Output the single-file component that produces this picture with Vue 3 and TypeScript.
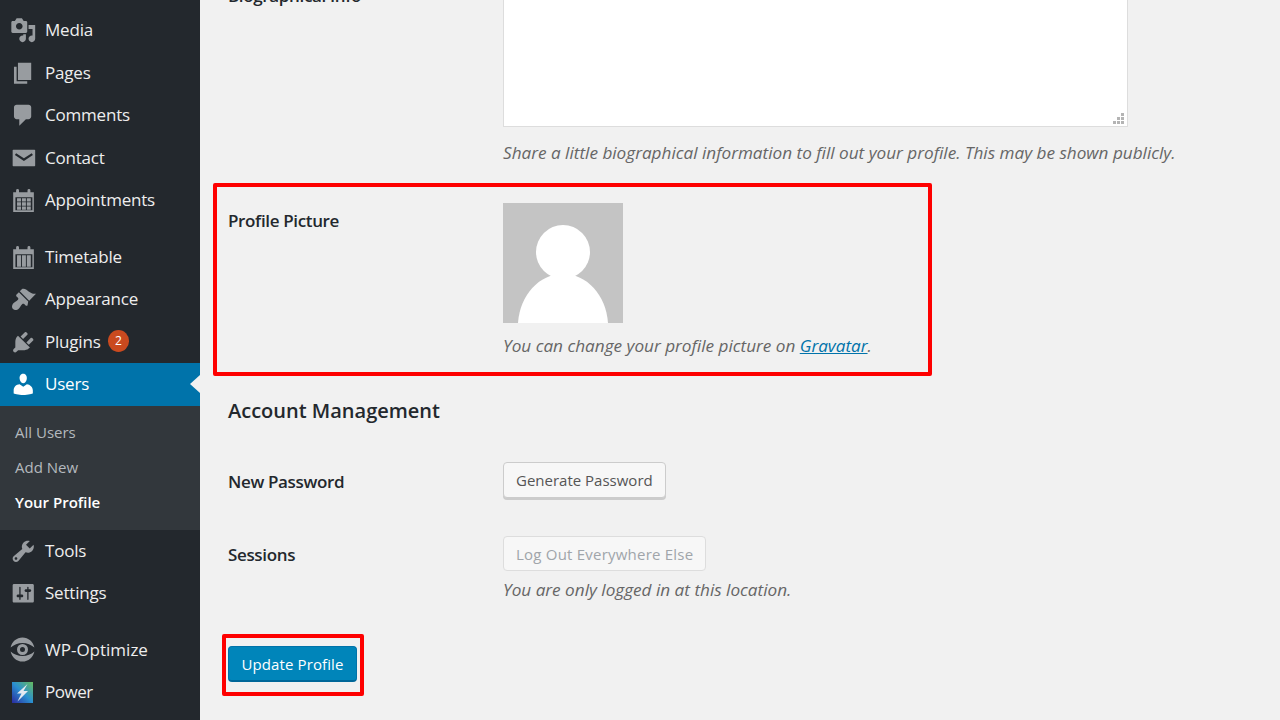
<script setup lang="ts">
interface MenuItem {
  label: string
  d: string
}

const cells = [5.3, 9, 12.7]
  .flatMap((x) => [8.5, 11.6, 14.7].map((y) => `M${x} ${y}h3v2.5h-3z`))
  .join('')
const calendarFrame = 'M2.4 4h2.200V2.600a1.100 1.100 0 0 1 2.200 0V4h6.400V2.600a1.100 1.100 0 0 1 2.200 0V4h2.600v14.900H2.400zM4.100 7.700v9.800h12.800V7.700z'

const groupA: MenuItem[] = [
  { label: 'Media', d: 'M13 11V4c0-.55-.45-1-1-1h-1.67L9 1H5L3.67 3H2c-.55 0-1 .45-1 1v7c0 .55.45 1 1 1h10c.55 0 1-.45 1-1zM7 4.5c1.38 0 2.5 1.12 2.5 2.5S8.38 9.5 7 9.5 4.5 8.38 4.5 7 5.62 4.5 7 4.5zM14 6h5v10.5c0 1.38-1.12 2.5-2.5 2.5S14 17.88 14 16.5s1.12-2.5 2.5-2.5c.17 0 .34.02.5.05V9h-3V6zm-4 8.05V13h2v3.5c0 1.38-1.12 2.5-2.5 2.5S7 17.88 7 16.5 8.12 14 9.5 14c.17 0 .34.02.5.05z' },
  { label: 'Pages', d: 'M6 15V2h10v13H6zm-1 1h8v2H3V5h2v11z' },
  { label: 'Comments', d: 'M5 2h9c1.1 0 2 .9 2 2v7c0 1.1-.9 2-2 2h-2l-5 5v-5H5c-1.1 0-2-.9-2-2V4c0-1.1.9-2 2-2z' },
  { label: 'Contact', d: 'M2.5 3.500h16a.5.5 0 0 1 .5.5v11.500a.5.5 0 0 1-.5.5h-16a.5.5 0 0 1-.5-.5V4a.5.5 0 0 1 .5-.5zM4.600 6.200l-.9 1.300 6.800 4.600 6.800-4.600-.9-1.300-5.900 3.800z' },
  { label: 'Appointments', d: calendarFrame + cells }
]

const groupB: MenuItem[] = [
  { label: 'Timetable', d: calendarFrame + 'M5.300 8.500h3v8.700h-3zM9 8.500h3v8.700H9zM12.700 8.500h3v8.700h-3z' },
  { label: 'Appearance', d: 'M14.48 11.06L7.41 3.99l1.5-1.5c.5-.56 2.3-.47 3.51.32 1.21.8 1.43 1.28 2.91 2.1 1.18.64 2.45 1.26 4.45.85zM13.77 11.77L6.7 4.7 4.93 6.47c-.39.39-.39 1.02 0 1.41l1.06 1.06c.39.39.39 1.03 0 1.42-.6.6-1.43 1.11-2.21 1.69-.35.26-.7.53-1.01.84-1.34 1.34-1.75 3.3-.5 4.5s3.1.9 4.5-.5c.3-.3.6-.7.85-1.05.58-.78 1.09-1.6 1.69-2.2.39-.39 1.03-.39 1.42 0l1.06 1.06c.39.39 1.02.39 1.41 0z' },
  { label: 'Plugins', d: 'M13.11 4.36L9.87 7.6 8 5.73l3.24-3.24c.35-.34 1.05-.2 1.56.32.52.51.66 1.21.31 1.55zm-8 1.77l.91-1.12 9.01 9.01-1.19.84c-.71.71-2.63 1.16-3.82 1.16H6.14L4.9 17.26c-.59.59-1.54.59-2.12 0-.59-.58-.59-1.53 0-2.12l1.24-1.24v-3.88c0-1.13.4-3.19 1.09-3.89zm7.26 3.97l3.24-3.24c.34-.35 1.04-.21 1.55.31.52.51.66 1.21.31 1.55l-3.24 3.25z' }
]

const usersIcon = 'M10 9.25c-2.27 0-2.73-3.44-2.73-3.44C7 4.02 7.82 2 9.97 2c2.16 0 2.98 2.02 2.71 3.81 0 0-.41 3.44-2.68 3.44zm0 2.57L12.72 10c2.39 0 4.52 2.33 4.52 4.53v2.49s-3.65 1.13-7.24 1.13c-3.65 0-7.24-1.13-7.24-1.13v-2.49c0-2.25 1.94-4.48 4.47-4.48z'

const groupC: MenuItem[] = [
  { label: 'Tools', d: 'M16.68 9.77c-1.34 1.34-3.3 1.67-4.95.99l-5.41 6.52c-.99.99-2.59.99-3.58 0s-.99-2.59 0-3.57l6.52-5.42c-.68-1.65-.35-3.61.99-4.95 1.28-1.28 3.12-1.62 4.72-1.06l-2.89 2.89 2.82 2.82 2.86-2.87c.53 1.58.18 3.39-1.08 4.65zM3.81 16.21c.4.39 1.04.39 1.43 0 .4-.4.4-1.04 0-1.43-.39-.4-1.03-.4-1.43 0-.39.39-.39 1.03 0 1.43z' },
  { label: 'Settings', d: 'M18 16V4c0-.55-.45-1-1-1H3c-.55 0-1 .45-1 1v12c0 .55.45 1 1 1h14c.55 0 1-.45 1-1zM8 11h1c.55 0 1 .45 1 1s-.45 1-1 1H8v1.5c0 .28-.22.5-.5.5s-.5-.22-.5-.5V13H6c-.55 0-1-.45-1-1s.45-1 1-1h1V5.5c0-.28.22-.5.5-.5s.5.22.5.5V11zm5-2h-1c-.55 0-1-.45-1-1s.45-1 1-1h1V5.5c0-.28.22-.5.5-.5s.5.22.5.5V7h1c.55 0 1 .45 1 1s-.45 1-1 1h-1v5.5c0 .28-.22.5-.5.5s-.5-.22-.5-.5V9z' }
]

const subItems: string[] = ['All Users', 'Add New', 'Your Profile']
</script>

<template>
  <div class="page">
    <aside class="sidebar">
      <div class="group">
        <div v-for="item in groupA" :key="item.label" class="item">
          <svg class="icon" viewBox="0 0 20 20"><path :d="item.d" fill-rule="evenodd" /></svg>
          <span>{{ item.label }}</span>
        </div>
      </div>
      <div class="group">
        <div v-for="item in groupB" :key="item.label" class="item">
          <svg class="icon" viewBox="0 0 20 20"><path :d="item.d" fill-rule="evenodd" /></svg>
          <span>{{ item.label }}</span>
          <span v-if="item.label === 'Plugins'" class="badge">2</span>
        </div>
        <div class="item current">
          <svg class="icon" viewBox="0 0 20 20"><path :d="usersIcon" /></svg>
          <span>Users</span>
          <i class="arrow"></i>
        </div>
        <div class="submenu">
          <div v-for="(s, i) in subItems" :key="s" class="sub" :class="{ active: i === 2 }">{{ s }}</div>
        </div>
        <div v-for="item in groupC" :key="item.label" class="item">
          <svg class="icon" viewBox="0 0 20 20"><path :d="item.d" fill-rule="evenodd" /></svg>
          <span>{{ item.label }}</span>
        </div>
      </div>
      <div class="group">
        <div class="item wp-optimize">
          <svg class="icon wide" viewBox="0 0 25 25">
            <path d="M.6 10.600C1.800 4.800 6.700.5 12.500.5s10.700 4.300 11.900 10.100C21.200 7.800 17 6 12.500 6S3.800 7.800.6 10.600z" />
            <path d="M.6 14.400C1.800 20.200 6.700 24.500 12.500 24.500s10.700-4.300 11.900-10.100C21.200 17.200 17 19 12.500 19S3.800 17.200.6 14.400z" />
            <path fill-rule="evenodd" d="M12.500 7a5.500 5.500 0 1 1 0 11 5.500 5.500 0 0 1 0-11zM12.500 10a2.500 2.500 0 1 0 0 5 2.500 2.500 0 0 0 0-5z" />
          </svg>
          <span>WP-Optimize</span>
        </div>
        <div class="item power-item">
          <svg class="power" viewBox="0 0 21 21">
            <defs>
              <linearGradient id="pw" x1="0" y1="1" x2="1" y2="0">
                <stop offset="0" stop-color="#2b2a9e" />
                <stop offset="0.5" stop-color="#2a8fd0" />
                <stop offset="1" stop-color="#66bb5e" />
              </linearGradient>
            </defs>
            <rect width="21" height="21" fill="url(#pw)" />
            <path d="M15.500 2L5 11.500H9.500L5.500 19.500 16 9h-4.500z" fill="#e4e9f1" />
          </svg>
          <span>Power</span>
        </div>
      </div>
    </aside>

    <main class="main">
      <section class="row bio-row">
        <div class="label">Biographical Info</div>
        <div class="field">
          <div class="textarea">
            <svg class="grip" viewBox="0 0 11 11">
              <path d="M8 0h3v3H8zM4 4h3v3H4zM8 4h3v3H8zM0 8h3v3H0zM4 8h3v3H4zM8 8h3v3H8z" />
            </svg>
          </div>
          <p class="desc bio-desc">Share a little biographical information to fill out your profile. This may be shown publicly.</p>
        </div>
      </section>

      <section class="row picture-row">
        <div class="label">Profile Picture</div>
        <div class="field">
          <svg class="avatar" viewBox="0 0 120 120">
            <rect width="120" height="120" fill="#c4c4c4" />
            <ellipse cx="60" cy="49" rx="27" ry="27" fill="#fff" />
            <path d="M15 120C17 92 36 71 60 71s43 21 45 49z" fill="#fff" />
          </svg>
          <p class="desc picture-desc">You can change your profile picture on <a class="link">Gravatar</a>.</p>
        </div>
      </section>

      <h2 class="heading">Account Management</h2>

      <section class="row password-row">
        <div class="label">New Password</div>
        <div class="field"><button class="btn" type="button">Generate Password</button></div>
      </section>

      <section class="row sessions-row">
        <div class="label">Sessions</div>
        <div class="field">
          <button class="btn disabled" type="button">Log Out Everywhere Else</button>
          <p class="desc sessions-desc">You are only logged in at this location.</p>
        </div>
      </section>

      <button class="primary" type="button">Update Profile</button>
    </main>

    <div class="mark mark-picture"></div>
    <div class="mark mark-update"></div>
  </div>
</template>

<style>
html, body { margin: 0; background: #f1f1f1; overflow: hidden; }
</style>

<style scoped>
.page {
  position: relative;
  display: flex;
  width: 1280px;
  height: 720px;
  overflow: hidden;
  background: #f1f1f1;
  font-family: "Open Sans", "Liberation Sans", sans-serif;
  color: #23282d;
}
.sidebar {
  flex: 0 0 200px;
  height: 720px;
  padding-top: 9px;
  box-sizing: border-box;
  background: #23282d;
  display: flex;
  flex-direction: column;
  gap: 14px;
}
.item {
  position: relative;
  display: flex;
  align-items: center;
  height: 42.5px;
  padding-left: 45px;
  padding-bottom: 1px;
  box-sizing: border-box;
  font-size: 17px;
  letter-spacing: -0.2px;
  color: #eee;
}
.wp-optimize { letter-spacing: 0; }
.power-item { letter-spacing: -0.5px; }
.icon {
  position: absolute;
  left: 9.5px;
  top: 8px;
  width: 26.5px;
  height: 26.5px;
  fill: #989ca0;
}
.icon.wide {
  left: 10px;
  top: 8.5px;
  width: 25px;
  height: 25px;
}
.power {
  position: absolute;
  left: 12px;
  top: 10.5px;
  width: 21px;
  height: 21px;
}
.badge {
  width: 21.5px;
  height: 22px;
  margin-left: 7px;
  border-radius: 50%;
  background: #ca4a1f;
  color: #fff;
  font-size: 12px;
  line-height: 22px;
  letter-spacing: 0;
  text-align: center;
}
.current {
  background: #0073aa;
  color: #fff;
}
.current .icon { fill: #fff; }
.arrow {
  position: absolute;
  right: 0;
  top: 12px;
  width: 0;
  height: 0;
  border-style: solid;
  border-width: 9.5px 10px 9.5px 0;
  border-color: transparent #f1f1f1 transparent transparent;
}
.submenu {
  height: 124px;
  padding: 9px 0 11px;
  box-sizing: border-box;
  background: #32373c;
}
.sub {
  height: 35px;
  line-height: 35px;
  padding-left: 15px;
  font-size: 15px;
  color: #b4b9be;
}
.sub.active {
  color: #fff;
  font-weight: 600;
}
.main {
  flex: 1;
  min-width: 0;
  padding-left: 28px;
  margin-top: -20px;
  display: flex;
  flex-direction: column;
  align-items: flex-start;
}
.row {
  display: flex;
  align-items: flex-start;
}
.label {
  flex: 0 0 275px;
  font-size: 17px;
  font-weight: 600;
  line-height: 26px;
  letter-spacing: -0.35px;
  color: #23282d;
}
.bio-row .label { padding-top: 3px; }
.field {
  display: flex;
  flex-direction: column;
  align-items: flex-start;
}
.textarea {
  position: relative;
  width: 625px;
  height: 147px;
  box-sizing: border-box;
  background: #fff;
  border: 1px solid #ddd;
}
.grip {
  position: absolute;
  right: 3px;
  bottom: 2px;
  width: 11px;
  height: 11px;
  fill: #b4b4b4;
}
.desc {
  margin: 0;
  font-size: 17.15px;
  line-height: 26px;
  font-style: italic;
  color: #666;
  white-space: nowrap;
}
.bio-desc { margin-top: 13px; }
.picture-row { margin-top: 37px; }
.picture-row .label { padding-top: 5px; }
.avatar {
  display: block;
  width: 120px;
  height: 120px;
}
.picture-desc { margin-top: 10px; }
.link {
  color: #0073aa;
  text-decoration: underline;
}
.heading {
  margin: 37px 0 0;
  font-size: 20px;
  font-weight: 600;
  line-height: 30px;
  color: #23282d;
}
.password-row { margin-top: 36px; }
.password-row .label { padding-top: 7px; }
.sessions-row { margin-top: 38px; }
.sessions-row .label { padding-top: 6px; }
.sessions-desc { margin-top: 6px; }
.btn {
  height: 36px;
  padding: 0 12px;
  box-sizing: border-box;
  border: 1px solid #ccc;
  border-radius: 4px;
  background: #f7f7f7;
  box-shadow: 0 2px 0 #ccc;
  font: 15px "Open Sans", "Liberation Sans", sans-serif;
  color: #555;
  white-space: nowrap;
}
.btn.disabled {
  height: 35px;
  border-color: #ddd;
  box-shadow: none;
  color: #a0a5aa;
  letter-spacing: 0.22px;
}
.primary {
  height: 36px;
  width: 129px;
  margin-top: 43px;
  padding: 0;
  border: 1px solid #0073aa;
  border-bottom: 2px solid #006799;
  border-radius: 4px;
  background: #0085ba;
  font: 15px "Open Sans", "Liberation Sans", sans-serif;
  letter-spacing: 0.1px;
  color: #fff;
  white-space: nowrap;
}
.mark {
  position: absolute;
  box-sizing: border-box;
  border: 4px solid #fe0000;
  border-radius: 2px;
}
.mark-picture {
  left: 213px;
  top: 183px;
  width: 719px;
  height: 193px;
}
.mark-update {
  left: 222px;
  top: 634px;
  width: 142px;
  height: 62px;
}
</style>
